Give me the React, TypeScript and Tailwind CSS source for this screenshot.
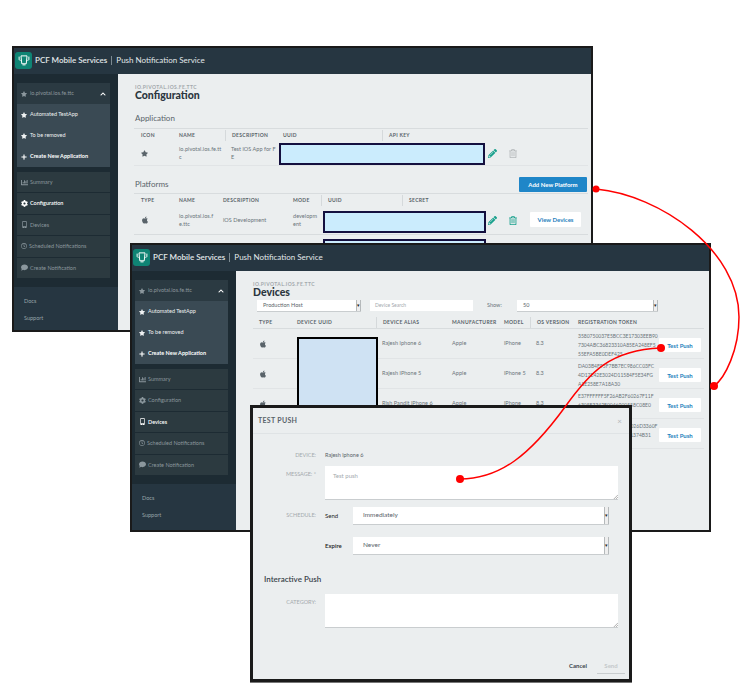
import type { ReactNode } from "react";
import { FaApple, FaChartBar, FaChevronUp, FaCog, FaComment, FaMobileAlt, FaPencilAlt, FaPlus, FaRegClock, FaRegTrashAlt, FaStar } from "react-icons/fa";

const font = "font-['Lato','Noto_Sans',sans-serif]";

function Logo() {
  return (
    <div className="flex h-[17px] w-[17px] shrink-0 items-center justify-center rounded-[3px] bg-[#0f8474]">
      <svg viewBox="0 0 16 16" className="h-[12px] w-[12px]" fill="none" stroke="white" strokeWidth="1.3">
        <path d="M1.5 3.5v3.5c0 1 .8 1.5 2 1.5M14.5 3.5v3.5c0 1-.8 1.5-2 1.5" />
        <path d="M4 2.5h8l-1 10.5h-6z" />
        <path d="M6 14.5h4" />
      </svg>
    </div>
  );
}

const navItems: { label: string; icon: ReactNode }[] = [
  { label: "Summary", icon: <FaChartBar className="h-[7px] w-[7px]" /> },
  { label: "Configuration", icon: <FaCog className="h-[7px] w-[7px]" /> },
  { label: "Devices", icon: <FaMobileAlt className="h-[7px] w-[7px]" /> },
  { label: "Scheduled Notifications", icon: <FaRegClock className="h-[6px] w-[6px]" /> },
  { label: "Create Notification", icon: <FaComment className="h-[7px] w-[7px]" /> },
];

function Sidebar({ active, app }: { active: string; app: string }) {
  return (
    <div className="flex w-[104px] shrink-0 flex-col bg-[#1d2b33]">
      <div className="h-[213px] shrink-0 pl-[3px] pr-[8px] pt-[9px]">
        <div className="flex h-[21px] items-center gap-[3px] bg-[#2b3a42] pl-[4px] pr-[4px] text-[5.5px] text-[#8b979d]">
          <FaStar className="h-[6px] w-[6px]" />
          <span className="flex-1 truncate">{app}</span>
          <FaChevronUp className="h-[6px] w-[6px] text-white" />
        </div>
        <div className="bg-[#3a4a54] text-[5.5px]">
          {["Automated TestApp", "To be removed"].map((label) => (
            <div key={label} className="flex h-[21px] items-center gap-[3px] pl-[4px] text-[#eef1f2]">
              <FaStar className="h-[6px] w-[6px]" />
              <span>{label}</span>
            </div>
          ))}
          <div className="flex h-[21px] items-center gap-[3px] pl-[4px] font-bold text-white">
            <FaPlus className="h-[6px] w-[6px]" />
            <span>Create New Application</span>
          </div>
        </div>
        <div className="mt-[5px] flex flex-col gap-px">
          {navItems.map((item) => {
            const on = item.label === active;
            return (
              <div
                key={item.label}
                className={`flex h-[20.4px] items-center gap-[2px] bg-[#2c3a40] pl-[4px] text-[5.5px] ${on ? "font-semibold text-white" : "text-[#8b979d]"}`}
              >
                {item.icon}
                <span>{item.label}</span>
              </div>
            );
          })}
        </div>
      </div>
      <div className="flex flex-1 flex-col gap-[9px] bg-[#263641] pl-[10px] pt-[10px] text-[5.5px] text-[#98a4a9]">
        <span>Docs</span>
        <span>Support</span>
      </div>
    </div>
  );
}

function AppWindow({ className, active, app, children }: { className: string; active: string; app: string; children: ReactNode }) {
  return (
    <div className={`absolute flex flex-col overflow-hidden border-2 border-[#1a1a1a] bg-[#ebeeef] ${className}`}>
      <div className="flex h-[26px] shrink-0 items-center gap-[3px] bg-[#263641] pb-[2px] pl-[1px] text-[8px] text-[#e3e8ea]">
        <Logo />
        <span className="font-semibold">PCF Mobile Services</span>
        <span className="ml-[1px] h-[9px] border-l border-[#7d8b92]" />
        <span className="ml-[1px]">Push Notification Service</span>
      </div>
      <div className="flex min-h-0 flex-1">
        <Sidebar active={active} app={app} />
        <div className="min-w-0 flex-1">{children}</div>
      </div>
    </div>
  );
}

function Title({ children }: { children: ReactNode }) {
  return (
    <div className="pl-[1px]">
      <div className="text-[5px] font-bold leading-[5px] tracking-[0.4px] text-[#a3a9ad]">IO.PIVOTAL.IOS.FE.TTC</div>
      <div className="text-[10.5px] font-black leading-[10px] text-[#2b3640]">{children}</div>
    </div>
  );
}

function Head({ w, label, sep }: { w: number; label: string; sep?: boolean }) {
  return (
    <div style={{ width: w }} className={`flex h-[11px] shrink-0 items-center pl-[6px] text-[5px] font-bold tracking-[0.3px] text-[#59636a] ${sep ? "border-l border-[#d5d9db]" : ""}`}>
      {label}
    </div>
  );
}

function Cell({ w, children }: { w: number; children?: ReactNode }) {
  return (
    <div style={{ width: w }} className="flex shrink-0 items-center pl-[6px] text-[5.5px] leading-[8.5px] tracking-[0.05px] text-[#6a747a]">
      <div>{children}</div>
    </div>
  );
}

function ConfigContent() {
  return (
    <div className="pl-[16px] pr-[3px] pt-[11px]">
      <Title>Configuration</Title>
      <div className="pl-[1px] pt-[13px] text-[8px] leading-[10px] text-[#59636a]">Application</div>
      <div className="mt-[5px] border-t border-[#d8dcde]">
        <div className="flex items-center pl-[1px] pt-[1px]">
          <Head w={38} label="ICON" />
          <Head w={52} label="NAME" />
          <Head w={52} label="DESCRIPTION" sep />
          <Head w={105} label="UUID" />
          <Head w={200} label="API KEY" sep />
        </div>
        <div className="relative flex h-[25px] border-b border-[#e1e4e6] pl-[1px]">
          <Cell w={38}><FaStar className="h-[7px] w-[7px] text-[#59636a]" /></Cell>
          <Cell w={52}>io.pivotal.ios.fe.tt<br />c</Cell>
          <Cell w={51}>Test iOS App for F<br />E</Cell>
          <div className="absolute left-[145px] top-[2px] h-[22px] w-[206px] border-2 border-[#14103f] bg-[#cbecfd]" />
          <FaPencilAlt className="absolute left-[354px] top-[8px] h-[9px] w-[9px] text-[#17a08c]" />
          <FaRegTrashAlt className="absolute left-[375px] top-[8px] h-[9px] w-[8px] text-[#b4b8ba]" />
        </div>
      </div>
      <div className="mt-[10px] flex h-[16px] items-center justify-between pl-[1px] pr-[1px]">
        <span className="text-[8px] text-[#59636a]">Platforms</span>
        <span className="flex h-[15px] w-[68px] items-center justify-center rounded-[1px] bg-[#1f86c8] text-[6px] font-bold text-white">Add New Platform</span>
      </div>
      <div className="mt-[1px] border-t border-[#d8dcde]">
        <div className="flex items-center pl-[1px] pt-[1px]">
          <Head w={38} label="TYPE" />
          <Head w={44} label="NAME" />
          <Head w={70} label="DESCRIPTION" />
          <Head w={34} label="MODE" />
          <Head w={81} label="UUID" sep />
          <Head w={100} label="SECRET" sep />
        </div>
        <div className="relative flex h-[29px] border-b border-[#d8dcde] pl-[1px]">
          <Cell w={38}><FaApple className="h-[8px] w-[8px] text-[#59636a]" /></Cell>
          <Cell w={44}>io.pivotal.ios.f<br />e.ttc</Cell>
          <Cell w={70}>iOS Development</Cell>
          <Cell w={34}>developm<br />ent</Cell>
          <div className="absolute left-[189px] top-[5px] h-[22px] w-[163px] border-2 border-[#14103f] bg-[#cbecfd]" />
          <FaPencilAlt className="absolute left-[354px] top-[10px] h-[9px] w-[9px] text-[#17a08c]" />
          <FaRegTrashAlt className="absolute left-[375px] top-[10px] h-[9px] w-[8px] text-[#17a08c]" />
          <span className="absolute left-[396px] top-[6px] flex h-[15px] w-[51px] items-center justify-center rounded-[1px] bg-white text-[6px] font-bold text-[#1f7fbd]">View Devices</span>
        </div>
        <div className="relative h-[26px]">
          <div className="absolute left-[189px] top-[4px] h-[22px] w-[163px] border-2 border-[#14103f] bg-[#cbecfd]" />
        </div>
      </div>
    </div>
  );
}

const devices = [
  { alias: "Rajesh iphone 6", model: "iPhone", token: ["3580750037E5BCC3E17303EEB90", "7304ABC36823310A85EA248EF5", "55EFA5BE0DEF425"] },
  { alias: "Rajesh iPhone 5", model: "iPhone 5", token: ["DA03B4F95F7BB7EC986CC03FC", "4D17E42E3024D11584F5E34FG", "A1E258E7A18A30"] },
  { alias: "Rish Pandit iPhone 6", model: "iPhone", token: ["E37FFFFFF5F26AB2F60267F11F", "6305E3342F0046900558C08E0"] },
  { alias: "Test iPhone", model: "iPhone", token: ["E37FFFFFF5F26AB2F6026D3360F", "6305E33420046900581374B31"] },
];

function FakeSelect({ className, label, text }: { className: string; label: string; text: string }) {
  return (
    <div className={`flex items-center justify-between bg-white shadow-[0_1px_0_#c9cdcf] ${className}`}>
      <span className={text}>{label}</span>
      <span className="flex h-full w-[5px] items-center justify-center border-x border-[#b5b9bb] bg-[#eeeeee] text-[5px] leading-none text-[#222]">▾</span>
    </div>
  );
}

function DevicesContent() {
  return (
    <div className="pl-[16px] pr-[5px] pt-[11px]">
      <Title>Devices</Title>
      <div className="mt-[3px] flex h-[11px] items-center pl-[5px]">
        <FakeSelect className="h-[11px] w-[104px]" label="Production Host" text="pl-[6px] text-[5.5px] text-[#59636a]" />
        <div className="ml-[9px] flex h-[11px] w-[103px] items-center bg-white pl-[5px] text-[5px] text-[#a3a9ad]">Device Search</div>
        <span className="ml-[14px] w-[30px] text-[5.5px] text-[#6a747a]">Show:</span>
        <FakeSelect className="h-[11px] w-[141px]" label="50" text="pl-[6px] text-[5.5px] text-[#59636a]" />
      </div>
      <div className="ml-[1px] mt-[2px] flex h-[16px] items-end border-b border-[#d8dcde]">
        <Head w={38} label="TYPE" />
        <Head w={85} label="DEVICE UUID" />
        <Head w={70} label="DEVICE ALIAS" sep />
        <Head w={52} label="MANUFACTURER" />
        <Head w={32} label="MODEL" />
        <Head w={42} label="OS VERSION" sep />
        <Head w={132} label="REGISTRATION TOKEN" />
      </div>
      <div className="relative ml-[1px]">
        {devices.map((d) => (
          <div key={d.alias} className="flex h-[30px] border-b border-[#e1e4e6]">
            <Cell w={38}><FaApple className="h-[8px] w-[8px] text-[#59636a]" /></Cell>
            <Cell w={85} />
            <Cell w={70}>{d.alias}</Cell>
            <Cell w={52}>Apple</Cell>
            <Cell w={32}>{d.model}</Cell>
            <Cell w={42}>8.3</Cell>
            <div className="w-[87px] shrink-0 whitespace-nowrap pl-[6px] pt-[2.5px] text-[5px] leading-[9px] text-[#6a747a]">
              {d.token.map((line) => (
                <div key={line}>{line}</div>
              ))}
            </div>
            <span className="mt-[9px] flex h-[14px] w-[42px] shrink-0 items-center justify-center rounded-[1px] bg-white text-[6px] font-bold text-[#1f7fbd]">Test Push</span>
          </div>
        ))}
        <div className="absolute left-[44px] top-[8px] h-[80px] w-[81px] border-2 border-black bg-[#cfe2f3]" />
      </div>
    </div>
  );
}

function FieldLabel({ children }: { children: ReactNode }) {
  return <div className="w-[63px] shrink-0 text-right text-[5.5px] text-[#a3a9ad]">{children}</div>;
}

function TextBox({ children }: { children?: ReactNode }) {
  return (
    <div className="relative h-[33px] w-[293px] bg-white pl-[8px] pt-[5px] text-[6px] text-[#a3a9ad] shadow-[0_1px_0_#c9cdcf]">
      {children}
      <svg viewBox="0 0 6 6" className="absolute bottom-0 right-0 h-[5px] w-[5px]" stroke="#777" fill="none" strokeWidth="0.7">
        <path d="M1 6L6 1M3.5 6L6 3.5" />
      </svg>
    </div>
  );
}

function Modal() {
  return (
    <div className="absolute left-[250px] top-[405px] flex h-[277px] w-[382px] flex-col border-[3px] border-[#1a1a1a] bg-[#ebeeef] shadow-[0_1px_0_#777]">
      <div className="flex h-[26px] shrink-0 items-center justify-between border-b border-[#dfe3e5] pl-[5px] pr-[7px]">
        <span className="text-[7px] font-bold tracking-[0.3px] text-[#59636a]">TEST PUSH</span>
        <span className="text-[8px] leading-none text-[#b4b8ba]">×</span>
      </div>
      <div className="mt-[14px] flex h-[14px] shrink-0 items-center">
        <FieldLabel>DEVICE:</FieldLabel>
        <span className="pl-[9px] text-[5.5px] text-[#59636a]">Rajesh iphone 6</span>
      </div>
      <div className="flex pt-[4px]">
        <div className="pt-[4px]"><FieldLabel>MESSAGE: *</FieldLabel></div>
        <div className="pl-[9px]"><TextBox>Test push</TextBox></div>
      </div>
      <div className="flex items-center pt-[8px]">
        <FieldLabel>SCHEDULE:</FieldLabel>
        <span className="w-[37px] pl-[9px] text-[6px] text-[#222]">Send</span>
        <FakeSelect className="h-[16.5px] w-[256px]" label="Immediately" text="pl-[10px] text-[6.5px] text-[#59636a]" />
      </div>
      <div className="flex items-center pl-[63px] pt-[13px]">
        <span className="w-[37px] pl-[9px] text-[6px] font-semibold text-[#222]">Expire</span>
        <FakeSelect className="h-[17px] w-[256px]" label="Never" text="pl-[10px] text-[6.5px] text-[#59636a]" />
      </div>
      <div className="pl-[11px] pt-[20px] text-[8px] font-semibold leading-[10px] text-[#3a444b]">Interactive Push</div>
      <div className="flex pt-[10px]">
        <div className="pt-[4px]"><FieldLabel>CATEGORY:</FieldLabel></div>
        <div className="pl-[9px]"><TextBox /></div>
      </div>
      <div className="mt-auto flex items-start justify-end gap-[10px] pb-[5px] pr-[4px]">
        <span className="text-[6px] font-bold text-[#3a444b]">Cancel</span>
        <span className="w-[28px] border-b border-[#c9cdcf] pb-[3px] text-center text-[6px] font-bold text-[#c4c8ca]">Send</span>
      </div>
    </div>
  );
}

export default function App() {
  return (
    <div className={`relative h-[700px] w-[750px] overflow-hidden bg-white ${font}`}>
      <AppWindow className="left-[12px] top-[46px] h-[286px] w-[581px]" active="Configuration" app="io.pivotal.ios.fe.ttc">
        <ConfigContent />
      </AppWindow>
      <AppWindow className="left-[130px] top-[243px] h-[289px] w-[581px]" active="Devices" app="io.pivotal.ios.fe.ttc">
        <DevicesContent />
      </AppWindow>
      <Modal />
      <svg viewBox="0 0 750 700" className="pointer-events-none absolute inset-0 h-[700px] w-[750px]" fill="none" stroke="#ff0000" strokeWidth="1.5">
        <path d="M596 189C660 195 739 250 739 317C739 350 725 378 714 386" />
        <path d="M661 348C610 350 590 372 565 407C530 455 500 479 460 479" />
        <circle cx="596" cy="189" r="3.5" fill="#ff0000" stroke="none" />
        <circle cx="714" cy="386" r="4" fill="#ff0000" stroke="none" />
        <circle cx="661" cy="348" r="4" fill="#ff0000" stroke="none" />
        <circle cx="460" cy="479" r="4" fill="#ff0000" stroke="none" />
      </svg>
    </div>
  );
}
